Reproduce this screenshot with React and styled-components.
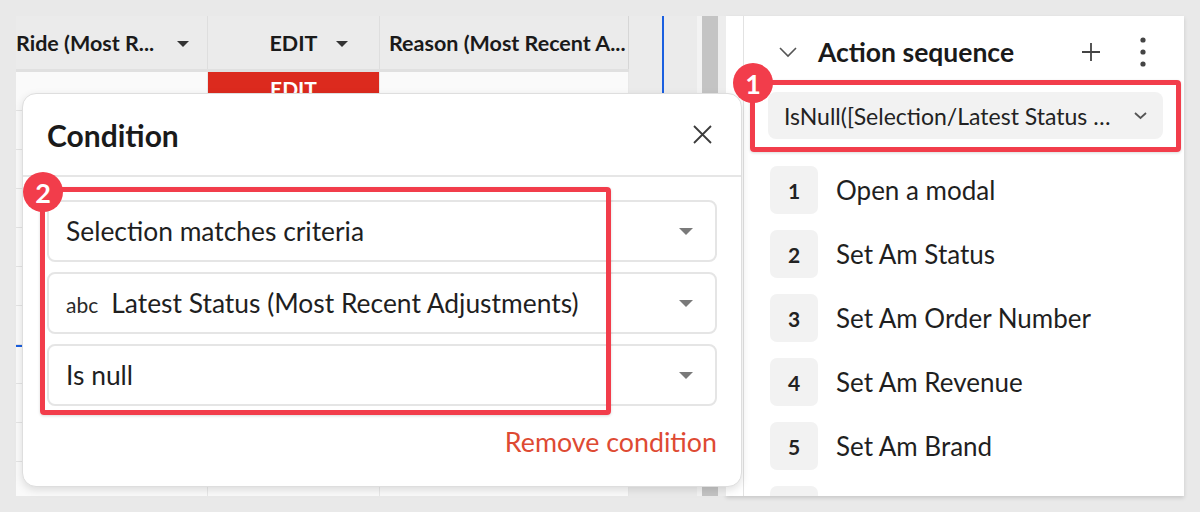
import React from "react";
import styled, { createGlobalStyle } from "styled-components";

const RED = "#f23d4b";

const GlobalStyle = createGlobalStyle`
	html, body {
		margin: 0;
		padding: 0;
	}
	body {
		background: #e9e9e9;
		font-family: Lato, "Noto Sans", sans-serif;
		color: #1d1d1d;
	}
`;

const steps = ["Open a modal", "Set Am Status", "Set Am Order Number", "Set Am Revenue", "Set Am Brand", ""];

const Caret = ({ color = "#333", w = 12, h = 6 }) => (
	<svg width={w} height={h} viewBox={`0 0 ${w} ${h}`}>
		<polygon points={`0,0 ${w},0 ${w / 2},${h}`} fill={color} />
	</svg>
);

const Chevron = ({ w = 18, h = 9, stroke = "#555", sw = 1.6 }) => (
	<svg width={w} height={h + 2} viewBox={`0 0 ${w} ${h + 2}`}>
		<polyline points={`1,1 ${w / 2},${h} ${w - 1},1`} fill="none" stroke={stroke} strokeWidth={sw} />
	</svg>
);

const CloseIcon = () => (
	<svg width="19" height="19" viewBox="0 0 19 19">
		<path d="M1 1 L18 18 M18 1 L1 18" stroke="#3b3b3b" strokeWidth="1.8" fill="none" />
	</svg>
);

const PlusIcon = () => (
	<svg width="18" height="18" viewBox="0 0 18 18">
		<path d="M9 0 V18 M0 9 H18" stroke="#444" strokeWidth="1.8" fill="none" />
	</svg>
);

const KebabIcon = () => (
	<svg width="6" height="30" viewBox="0 0 6 30">
		<circle cx="3" cy="3" r="2.6" fill="#444" />
		<circle cx="3" cy="15" r="2.6" fill="#444" />
		<circle cx="3" cy="27" r="2.6" fill="#444" />
	</svg>
);

const App = () => {
	const rows = Array.from({ length: 11 }, (_, i) => i);

	return (
		<Page>
			<GlobalStyle />
			<Frame>
				<Workspace>
					<Table>
						<HeaderRow>
							<HeadCell>
								Ride (Most R...
								<HeadCaret $right={18}>
									<Caret />
								</HeadCaret>
							</HeadCell>
							<HeadCell $center>
								EDIT
								<HeadCaret $right={31}>
									<Caret />
								</HeadCaret>
							</HeadCell>
							<HeadCell $pad={9} $last>
								Reason (Most Recent A...
							</HeadCell>
						</HeaderRow>
						{rows.map(i => (
							<BodyRow key={i} $selected={i === 7}>
								<BodyCell />
								<BodyCell $edit={i === 0}>{i === 0 ? "EDIT" : ""}</BodyCell>
								<BodyCell />
							</BodyRow>
						))}
					</Table>
					<Gutter>
						<GutterLane />
						<GutterLane $rule>
							<RuleMark />
						</GutterLane>
						<GutterLane $edge />
					</Gutter>
					<Scrollbar />
					<Trough />

					<Modal>
						<ModalHeader>
							<ModalTitle>Condition</ModalTitle>
							<CloseIcon />
						</ModalHeader>
						<ModalBody>
							<Select>
								<SelectText>Selection matches criteria</SelectText>
								<Caret color="#7a7a7a" w={14} h={7} />
							</Select>
							<Select>
								<SelectText>
									<TypeTag>abc</TypeTag>
									Latest Status (Most Recent Adjustments)
								</SelectText>
								<Caret color="#7a7a7a" w={14} h={7} />
							</Select>
							<Select>
								<SelectText>Is null</SelectText>
								<Caret color="#7a7a7a" w={14} h={7} />
							</Select>
							<RemoveLink>Remove condition</RemoveLink>
						</ModalBody>
					</Modal>

					<Callout $left={24} $top={171} $width={571} $height={228}>
						<Badge $top={-20}>2</Badge>
					</Callout>
				</Workspace>

				<Panel>
					<PanelGutter />
					<PanelBody>
						<PanelHeader>
							<Chevron />
							<PanelTitle>Action sequence</PanelTitle>
							<PlusIcon />
							<KebabIcon />
						</PanelHeader>
						<ConditionPicker>
							<PickerText>IsNull([Selection/Latest Status …</PickerText>
							<Chevron w={13} h={6} sw={1.8} />
						</ConditionPicker>
						<StepList>
							{steps.map((label, i) => (
								<StepRow key={i}>
									<StepNum>{label ? i + 1 : ""}</StepNum>
									{label && <StepLabel>{label}</StepLabel>}
								</StepRow>
							))}
						</StepList>
					</PanelBody>
					<Callout $left={24} $top={64} $width={431} $height={72}>
						<Badge $top={-22}>1</Badge>
					</Callout>
				</Panel>
			</Frame>
		</Page>
	);
};

const Page = styled.div`
	width: 1200px;
	height: 512px;
	padding: 16px;
	box-sizing: border-box;
	overflow: hidden;
`;

const Frame = styled.div`
	display: flex;
	width: 1168px;
	height: 480px;
`;

const Workspace = styled.div`
	position: relative;
	z-index: 2;
	width: 710px;
	height: 480px;
	display: flex;
	background: #ececec;
`;

const Table = styled.div`
	width: 613px;
	display: flex;
	flex-direction: column;
	background: #fafafa;
	overflow: hidden;
`;

const HeaderRow = styled.div`
	display: grid;
	grid-template-columns: 192px 172px 249px;
	height: 56px;
	box-sizing: border-box;
	background: #ebebeb;
	border-bottom: 3px solid #e0e0e0;
	flex-shrink: 0;
`;

const HeadCell = styled.div`
	position: relative;
	display: flex;
	align-items: center;
	justify-content: ${({ $center }) => ($center ? "center" : "flex-start")};
	padding-left: ${({ $pad }) => $pad || 0}px;
	border-right: 1px solid ${({ $last }) => ($last ? "#d6d6d6" : "#dedede")};
	font-size: 21.5px;
	font-weight: 700;
	color: #1a1a1a;
	white-space: nowrap;
	overflow: hidden;
`;

const HeadCaret = styled.span`
	position: absolute;
	right: ${({ $right }) => $right}px;
	top: 25px;
	display: flex;
`;

const BodyRow = styled.div`
	display: grid;
	grid-template-columns: 192px 172px 249px;
	height: 39px;
	box-sizing: border-box;
	border-bottom: 1px solid #e4e4e4;
	border-top: ${({ $selected }) => ($selected ? "2px solid #1a5fe0" : "0")};
	flex-shrink: 0;
`;

const BodyCell = styled.div`
	display: flex;
	align-items: center;
	justify-content: center;
	border-right: 1px solid #e8e8e8;
	background: ${({ $edit }) => ($edit ? "#dc2a1e" : "transparent")};
	color: #fff;
	font-size: 21px;
	font-weight: 700;
	padding-bottom: 6px;
`;

const Gutter = styled.div`
	width: 73px;
	display: flex;
`;

const GutterLane = styled.div`
	width: ${({ $rule, $edge }) => ($edge ? 5 : $rule ? 35 : 33)}px;
	background: ${({ $edge }) => ($edge ? "#f3f3f3" : "#ebebeb")};
	box-sizing: border-box;
`;

const RuleMark = styled.div`
	height: 300px;
	border-left: 2px solid #1a5fe0;
`;

const Scrollbar = styled.div`
	width: 16px;
	background: #c4c4c4;
`;

const Trough = styled.div`
	width: 8px;
	background: #ededed;
`;

const Modal = styled.div`
	position: absolute;
	left: 6px;
	top: 77px;
	width: 720px;
	height: 394px;
	box-sizing: border-box;
	background: #fff;
	border: 1px solid #dedede;
	border-radius: 14px;
	box-shadow: 0 3px 8px rgba(0, 0, 0, 0.12);
	display: flex;
	flex-direction: column;
`;

const ModalHeader = styled.div`
	height: 81px;
	display: flex;
	align-items: center;
	justify-content: space-between;
	padding: 0 29px 0 24px;
	border-bottom: 2px solid #e6e6e6;
	flex-shrink: 0;
`;

const ModalTitle = styled.h2`
	margin: 0;
	font-size: 30px;
	font-weight: 700;
	color: #1a1a1a;
`;

const ModalBody = styled.div`
	display: flex;
	flex-direction: column;
	gap: 10px;
	padding: 23px 24px 0 24px;
`;

const Select = styled.div`
	height: 62px;
	box-sizing: border-box;
	display: flex;
	align-items: center;
	justify-content: space-between;
	padding: 0 22px 0 17px;
	border: 2px solid #e5e5e5;
	border-radius: 8px;
`;

const SelectText = styled.span`
	display: flex;
	align-items: baseline;
	font-size: 26.4px;
	color: #1f1f1f;
`;

const TypeTag = styled.span`
	font-size: 21px;
	margin-right: 13px;
	color: #2a2a2a;
`;

const RemoveLink = styled.div`
	align-self: flex-end;
	margin-top: 10px;
	font-size: 26.8px;
	color: #de4a33;
`;

const Callout = styled.div`
	position: absolute;
	left: ${({ $left }) => $left}px;
	top: ${({ $top }) => $top}px;
	width: ${({ $width }) => $width}px;
	height: ${({ $height }) => $height}px;
	box-sizing: border-box;
	border: 5px solid ${RED};
	border-radius: 4px;
	box-shadow: 0 1px 3px rgba(0, 0, 0, 0.15);
	pointer-events: none;
`;

const Badge = styled.div`
	position: absolute;
	left: -22px;
	top: ${({ $top }) => $top}px;
	z-index: 5;
	width: 40px;
	height: 40px;
	border-radius: 50%;
	background: ${RED};
	color: #fff;
	font-size: 27px;
	font-weight: 700;
	display: flex;
	align-items: center;
	justify-content: center;
`;

const Panel = styled.aside`
	position: relative;
	width: 458px;
	height: 480px;
	display: flex;
	background: #fff;
	box-shadow: 0 2px 4px rgba(0, 0, 0, 0.14);
`;

const PanelGutter = styled.div`
	width: 17px;
	flex-shrink: 0;
`;

const PanelBody = styled.div`
	flex: 1;
	display: flex;
	flex-direction: column;
	border-left: 1px solid #e2e2e2;
	overflow: hidden;
`;

const PanelHeader = styled.div`
	height: 72px;
	display: flex;
	align-items: center;
	gap: 21px;
	padding: 0 38px 0 35px;
	flex-shrink: 0;

	& > svg:nth-of-type(2) {
		margin-right: 19px;
	}
`;

const PanelTitle = styled.h3`
	flex: 1;
	margin: 0;
	font-size: 26.5px;
	font-weight: 700;
	color: #1a1a1a;
`;

const ConditionPicker = styled.div`
	margin: 4px 21px 0 24px;
	height: 47px;
	display: flex;
	align-items: center;
	justify-content: space-between;
	padding: 0 16px 0 16px;
	background: #f2f2f2;
	border-radius: 8px;
	flex-shrink: 0;
`;

const PickerText = styled.span`
	font-size: 23px;
	color: #222;
	white-space: nowrap;
`;

const StepList = styled.div`
	display: flex;
	flex-direction: column;
	gap: 16px;
	margin-top: 27px;
	padding-left: 26px;
`;

const StepRow = styled.div`
	display: flex;
	align-items: center;
	gap: 18px;
`;

const StepNum = styled.div`
	width: 48px;
	height: 48px;
	flex-shrink: 0;
	border-radius: 7px;
	background: #f2f2f2;
	display: flex;
	align-items: center;
	justify-content: center;
	font-size: 21px;
	font-weight: 700;
	color: #222;
`;

const StepLabel = styled.span`
	font-size: 26px;
	color: #1f1f1f;
`;

export default App;
